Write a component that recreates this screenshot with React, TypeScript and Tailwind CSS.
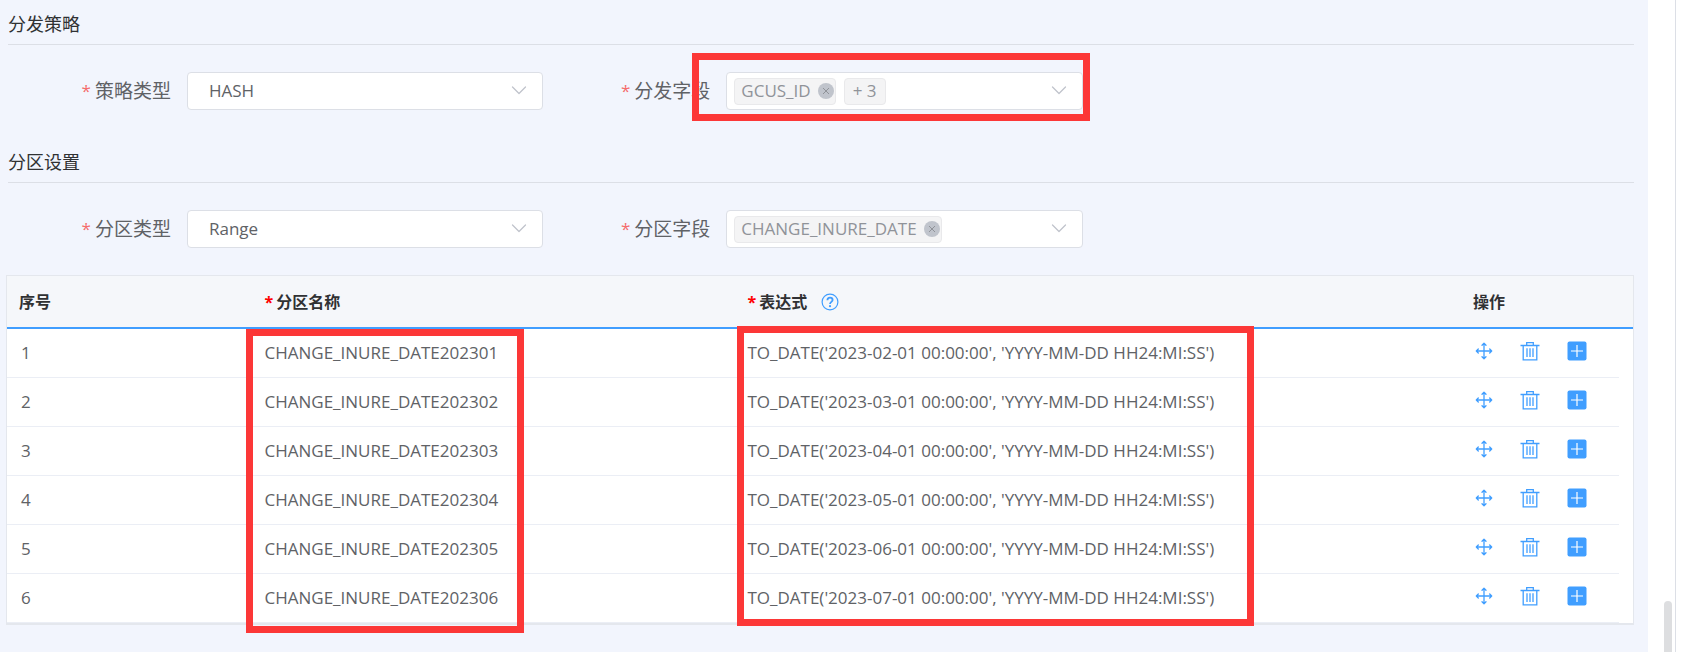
import { ReactNode } from 'react';

const rows = [
  { id: 1, name: 'CHANGE_INURE_DATE202301', date: '2023-02-01' },
  { id: 2, name: 'CHANGE_INURE_DATE202302', date: '2023-03-01' },
  { id: 3, name: 'CHANGE_INURE_DATE202303', date: '2023-04-01' },
  { id: 4, name: 'CHANGE_INURE_DATE202304', date: '2023-05-01' },
  { id: 5, name: 'CHANGE_INURE_DATE202305', date: '2023-06-01' },
  { id: 6, name: 'CHANGE_INURE_DATE202306', date: '2023-07-01' },
];

function Chevron() {
  return (
    <svg viewBox="0 0 16 16" className="h-4 w-4" fill="none" stroke="#c0c4cc" strokeWidth="1.3" strokeLinecap="round" strokeLinejoin="round">
      <path d="M1.5 4 8 10.5 14.5 4" />
    </svg>
  );
}

function MoveIcon() {
  return (
    <svg viewBox="0 0 18 18" className="h-[18px] w-[18px]" fill="none" stroke="#409eff" strokeWidth="1.3" strokeLinecap="round" strokeLinejoin="round">
      <path d="M9 1.5v15M1.5 9h15M7 3.3 9 1.3l2 2M7 14.7l2 2 2-2M3.3 7l-2 2 2 2M14.7 7l2 2-2 2" />
    </svg>
  );
}

function TrashIcon() {
  return (
    <svg viewBox="0 0 20 20" className="h-5 w-5" fill="none" stroke="#409eff" strokeWidth="1.3">
      <path d="M.5 4.5h19M3.2 4.5v14.4h13.6V4.5M6.7 4.3V1.6h6.6v2.7M7 7.2v8.8M10 7.2v8.8M13 7.2v8.8" />
    </svg>
  );
}

function PlusIcon() {
  return (
    <svg viewBox="0 0 20 20" className="h-5 w-5">
      <rect x=".5" y=".5" width="19" height="19" rx="2" fill="#409eff" />
      <path d="M10 4v12M4 10h12" stroke="#fff" strokeWidth="1.2" />
    </svg>
  );
}

function HelpIcon() {
  return (
    <svg viewBox="0 0 18 18" className="h-[18px] w-[18px]" fill="none" stroke="#409eff" strokeWidth="1.2">
      <circle cx="9" cy="9" r="7.9" />
      <path d="M6.4 7.2C6.4 5.5 7.4 4.6 9 4.6s2.6 1 2.6 2.4c0 1.8-2.6 2.1-2.6 4.1" strokeWidth="1.8" />
      <circle cx="9" cy="13.2" r="1.1" fill="#409eff" stroke="none" />
    </svg>
  );
}

function SectionTitle({ children }: { children: ReactNode }) {
  return <h2 className="border-b border-[#dcdfe6] pb-1.5 text-[18px] leading-7 text-[#303133]">{children}</h2>;
}

function Field({ id, label, children }: { id: string; label: string; children: ReactNode }) {
  return (
    <div className="flex items-center">
      <label htmlFor={id} className="flex h-[38px] w-[179px] shrink-0 items-center justify-end pr-4 text-[19px] text-[#606266]">
        <span className="mr-1 text-[17px] text-[#f56c6c]">*</span>
        {label}
      </label>
      <div className="relative min-w-0 flex-1">{children}</div>
    </div>
  );
}

function SingleSelect({ id, value }: { id: string; value: string }) {
  return (
    <>
      <select id={id} className="block h-[38px] w-full appearance-none rounded border border-[#dcdfe6] bg-white px-[21px] text-[17px] text-[#606266]">
        <option>{value}</option>
      </select>
      <span className="pointer-events-none absolute inset-y-0 right-4 flex items-center">
        <Chevron />
      </span>
    </>
  );
}

function MultiSelect({ id, value, extra }: { id: string; value: string; extra?: string }) {
  return (
    <div className="flex h-[38px] items-center gap-2 rounded border border-[#dcdfe6] bg-white pr-[15px] pl-[7px] text-[17px] text-[#909399]">
      <span className="flex h-[27px] items-center gap-[7px] rounded border border-[#e9e9eb] bg-[#f4f4f5] pr-px pl-1.5">
        {value}
        <button aria-label={`移除 ${value}`} className="flex h-4 w-4 items-center justify-center rounded-full bg-[#c0c4cc]">
          <svg viewBox="0 0 8 8" className="h-2 w-2" stroke="#909399" strokeWidth="1">
            <path d="m1 1 6 6M7 1 1 7" />
          </svg>
        </button>
      </span>
      {extra && <span className="flex h-[27px] items-center rounded border border-[#e9e9eb] bg-[#f4f4f5] px-2">{extra}</span>}
      <button id={id} aria-haspopup="listbox" className="flex flex-1 justify-end">
        <Chevron />
      </button>
    </div>
  );
}

export default function App() {
  return (
    <div className="flex min-h-screen bg-white font-['Open_Sans','Noto_Sans_CJK_SC',sans-serif]">
      <main className="min-w-0 flex-1 bg-[#f2f5fd] pr-3.5 pb-5 pl-1.5">
        <div className="pl-0.5">
          <section className="pt-2.5">
            <SectionTitle>分发策略</SectionTitle>
            <div className="mt-[27px] mr-3 grid grid-cols-3 gap-1">
              <Field id="strategy" label="策略类型">
                <SingleSelect id="strategy" value="HASH" />
              </Field>
              <Field id="dist-field" label="分发字段">
                <MultiSelect id="dist-field" value="GCUS_ID" extra="+ 3" />
                <span className="pointer-events-none absolute -top-[19px] -right-[7px] -bottom-[11px] -left-[34px] border-[7px] border-[#fc3737]" />
              </Field>
            </div>
          </section>
          <section className="mt-[38px]">
            <SectionTitle>分区设置</SectionTitle>
            <div className="mt-[27px] mr-3 grid grid-cols-3 gap-1">
              <Field id="part-type" label="分区类型">
                <SingleSelect id="part-type" value="Range" />
              </Field>
              <Field id="part-field" label="分区字段">
                <MultiSelect id="part-field" value="CHANGE_INURE_DATE" />
              </Field>
            </div>
          </section>
        </div>

        <div className="mt-[27px] border border-b-2 border-[#e4e7ed] bg-white">
          <table className="w-full table-fixed border-separate border-spacing-0 text-left text-[17px]">
            <colgroup>
              <col className="w-[15.1%]" />
              <col className="w-[29.7%]" />
              <col />
              <col className="w-[158px]" />
              <col className="w-3.5" />
            </colgroup>
            <thead>
              <tr className="h-[53px] bg-[#f5f7fa] text-[16px] text-[#303133] *:border-b-2 *:border-[#409eff]">
                <th className="px-3">序号</th>
                <th className="px-3">
                  <span className="mr-[3px] text-[#ff0000]">*</span>分区名称
                </th>
                <th className="px-3">
                  <span className="flex items-center">
                    <span className="mr-[3px] text-[#ff0000]">*</span>表达式
                    <button aria-label="帮助" className="ml-3.5">
                      <HelpIcon />
                    </button>
                  </span>
                </th>
                <th className="px-3">操作</th>
                <th />
              </tr>
            </thead>
            <tbody className="text-[#606266]">
              {rows.map((r, i) => (
                <tr key={r.id} className="h-[49px]">
                  <td className="border-b border-[#ebeef5] px-3.5">{r.id}</td>
                  <td className="relative border-b border-[#ebeef5] px-3">
                    {r.name}
                    {i === 0 && <span className="pointer-events-none absolute top-0 -left-[7px] z-10 h-[304px] w-[278px] border-[7px] border-[#fc3737]" />}
                  </td>
                  <td className="relative border-b border-[#ebeef5] px-3">
                    {`TO_DATE('${r.date} 00:00:00', 'YYYY-MM-DD HH24:MI:SS')`}
                    {i === 0 && <span className="pointer-events-none absolute -top-[3px] left-0.5 z-10 h-[300px] w-[517px] border-[7px] border-[#fc3737]" />}
                  </td>
                  <td className="border-b border-[#ebeef5] px-3.5">
                    <span className="flex items-center gap-[27px] pb-1">
                      <button aria-label="移动"><MoveIcon /></button>
                      <button aria-label="删除"><TrashIcon /></button>
                      <button aria-label="添加"><PlusIcon /></button>
                    </span>
                  </td>
                  <td />
                </tr>
              ))}
            </tbody>
          </table>
        </div>
      </main>
      <aside className="flex w-[41px] pl-4">
        <div className="mt-auto mr-[3px] h-[51px] w-2 rounded-t-full bg-[#dddee0]" />
        <div className="w-px bg-[#dcdfe6]" />
      </aside>
    </div>
  );
}
